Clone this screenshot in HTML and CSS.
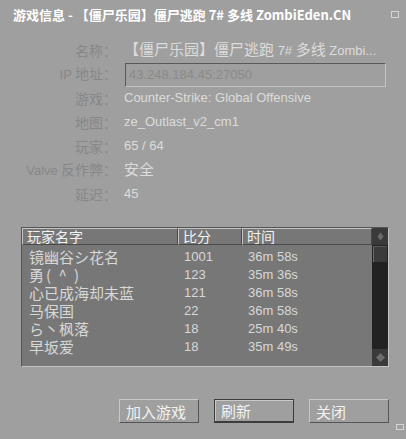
FILE: index.html
```html
<!DOCTYPE html>
<html lang="zh-CN">
<head>
    <meta charset="UTF-8" />
    <title>游戏信息</title>
    <link rel="stylesheet" href="styles.css">
</head>
<body>
    <div class="dialog">
        <div class="titlebar">
            <span class="title">游戏信息 - 【僵尸乐园】僵尸逃跑 7# 多线 ZombiEden.CN</span>
            <span class="title-box"></span>
        </div>

        <div class="info">
            <div class="label">名称：</div>
            <div class="value"><span class="cjk">【僵尸乐园】僵尸逃跑</span> 7# <span class="cjk">多线</span> Zombi...</div>

            <div class="label"><span class="lat">IP</span> 地址：</div>
            <div class="value"><input class="ip" type="text" value="43.248.184.45:27050" readonly></div>

            <div class="label">游戏：</div>
            <div class="value">Counter-Strike: Global Offensive</div>

            <div class="label">地图：</div>
            <div class="value">ze_Outlast_v2_cm1</div>

            <div class="label">玩家：</div>
            <div class="value">65 / 64</div>

            <div class="label"><span class="lat">Valve</span> 反作弊：</div>
            <div class="value"><span class="cjk">安全</span></div>

            <div class="label">延迟：</div>
            <div class="value">45</div>
        </div>

        <div class="list">
            <div class="list-main">
                <div class="list-head">
                    <div class="col-head">玩家名字</div>
                    <div class="col-head">比分</div>
                    <div class="col-head">时间</div>
                </div>
                <div class="list-body">
                    <div class="row"><span class="name">镜幽谷シ花名</span><span>1001</span><span>36m 58s</span></div>
                    <div class="row"><span class="name wide">勇( ^ )</span><span>123</span><span>35m 36s</span></div>
                    <div class="row"><span class="name">心已成海却未蓝</span><span>121</span><span>36m 58s</span></div>
                    <div class="row"><span class="name">马保国</span><span>22</span><span>36m 58s</span></div>
                    <div class="row"><span class="name">ら丶枫落</span><span>18</span><span>25m 40s</span></div>
                    <div class="row"><span class="name">早坂爱</span><span>18</span><span>35m 49s</span></div>
                </div>
            </div>
            <div class="scrollbar">
                <div class="sb-btn">
                    <svg width="7" height="9" viewBox="0 0 7 9"><path d="M3.5 0.5 L6.5 4.5 L3.5 8.5 L0.5 4.5 Z" fill="#6c6c6c"/></svg>
                </div>
                <div class="sb-thumb"></div>
                <div class="sb-track"></div>
                <div class="sb-btn">
                    <svg width="9" height="9" viewBox="0 0 9 9"><path d="M4.5 0 L9 4.5 L4.5 9 L0 4.5 Z" fill="#6c6c6c"/></svg>
                </div>
            </div>
        </div>

        <div class="actions">
            <button class="btn">加入游戏</button>
            <button class="btn focused">刷新</button>
            <button class="btn">关闭</button>
        </div>

        <span class="grip"></span>
    </div>
</body>
</html>
```

FILE: styles.css
```css
body {
    margin: 0;
    background: #9f9f9f;
    font-family: "Liberation Sans", "Noto Sans CJK SC", sans-serif;
}
.dialog {
    position: relative;
    width: 406px;
    height: 439px;
    overflow: hidden;
}
.titlebar {
    height: 28px;
    display: flex;
    align-items: center;
    padding-left: 13px;
}
.title {
    font-family: "Noto Sans CJK SC", sans-serif;
    font-size: 13px;
    font-weight: 700;
    color: #fff;
    white-space: nowrap;
}
.title-box {
    position: absolute;
    left: 391px;
    top: 11px;
    width: 6px;
    height: 5px;
    border: 1px solid #d4d4d4;
}
.info {
    margin-top: 10px;
    display: grid;
    grid-template-columns: 117px 1fr;
    grid-auto-rows: 24px;
    column-gap: 7px;
    align-items: center;
}
.label {
    text-align: right;
    font-family: "Noto Sans CJK SC", sans-serif;
    font-size: 14px;
    line-height: 20px;
    color: #878787;
    white-space: nowrap;
}
.lat {
    font-family: "Liberation Sans", sans-serif;
    font-size: 13px;
}
.value {
    font-size: 13px;
    line-height: 20px;
    color: #dcdcdc;
    white-space: nowrap;
}
.cjk {
    font-family: "Noto Sans CJK SC", sans-serif;
    font-size: 15px;
}
.ip {
    display: block;
    box-sizing: border-box;
    width: 261px;
    height: 24px;
    margin: 1px 0 0 1px;
    padding: 0 3px;
    background: transparent;
    border: 1px solid;
    border-color: #5a5a5a #c4c4c4 #c4c4c4 #5a5a5a;
    font-family: "Liberation Sans", sans-serif;
    font-size: 13px;
    color: #8a8a8a;
    outline: none;
}
.list {
    margin: 21px 0 0 21px;
    width: 368px;
    height: 140px;
    box-sizing: border-box;
    border: 1px solid;
    border-color: #555 #c4c4c4 #c4c4c4 #555;
    background: #777;
    display: grid;
    grid-template-columns: 350px 16px;
}
.list-head,
.row {
    display: grid;
    grid-template-columns: 156px 64px 130px;
}
.col-head {
    height: 17px;
    box-sizing: border-box;
    border: 1px solid;
    border-color: #c4c4c4 #4a4a4a #4a4a4a #c4c4c4;
    padding-left: 4px;
    font-family: "Noto Sans CJK SC", sans-serif;
    font-size: 14px;
    line-height: 15px;
    color: #f2f2f2;
}
.list-body {
    padding-top: 3px;
}
.row {
    height: 18px;
    align-items: center;
    font-size: 13px;
    line-height: 18px;
    color: #d8d8d8;
}
.row span {
    padding-left: 6px;
    white-space: nowrap;
}
.row .name {
    padding-left: 7px;
    font-family: "Noto Sans CJK SC", sans-serif;
    font-size: 15px;
    line-height: 18px;
}
.row .wide {
    letter-spacing: 2px;
}
.scrollbar {
    display: flex;
    flex-direction: column;
    background: #222;
}
.sb-btn {
    height: 17px;
    flex: none;
    background: #3a3a3a;
    display: flex;
    align-items: center;
    justify-content: center;
}
.sb-thumb {
    height: 16px;
    margin: 1px 1px 0 1px;
    box-sizing: border-box;
    background: #3b3b3b;
    border-left: 1px solid #6a6a6a;
    border-top: 1px solid #5a5a5a;
}
.sb-track {
    flex: 1;
}
.actions {
    margin-top: 32px;
    padding-right: 17px;
    display: flex;
    justify-content: flex-end;
    gap: 15px;
}
.btn {
    width: 80px;
    height: 24px;
    box-sizing: border-box;
    padding: 0 0 0 6px;
    background: #9f9f9f;
    border: 1px solid;
    border-color: #c8c8c8 #555 #555 #c8c8c8;
    font-family: "Noto Sans CJK SC", sans-serif;
    font-size: 15px;
    color: #f2f2f2;
    text-align: left;
}
.btn.focused {
    border-color: #3c3c3c;
    border-bottom-width: 2px;
    box-shadow: inset 1px 1px #c8c8c8;
}
.grip {
    position: absolute;
    left: 396px;
    top: 424px;
    width: 6px;
    height: 4px;
    border: 1px solid #d4d4d4;
}
```
